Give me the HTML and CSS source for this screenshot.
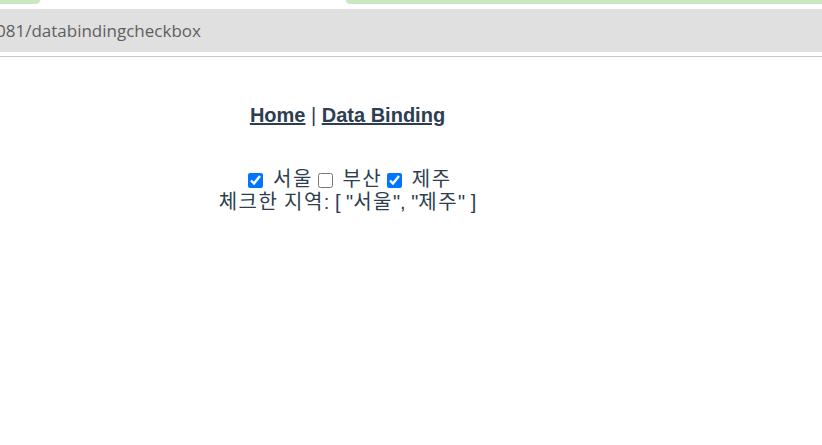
FILE: index.html
```html
<!DOCTYPE html>
<html lang="ko">
<head>
<meta charset="utf-8">
<title>databindingcheckbox</title>
<link rel="stylesheet" href="styles.css">
</head>
<body>
<div class="chrome">
  <div class="tabs">
    <div class="tab tab-left"></div>
    <div class="tab-gap"></div>
    <div class="tab tab-right"></div>
  </div>
  <div class="addressbar"><span class="url">081/databindingcheckbox</span></div>
  <div class="divider"></div>
</div>
<div class="page">
  <div class="nav"><a href="#" class="nav-link">Home</a> | <a href="#" class="nav-link">Data Binding</a></div>
  <div class="view">
    <div class="row"><input type="checkbox" id="seoul" class="cb" checked> <label for="seoul" class="ko">서울</label><input type="checkbox" id="busan" class="cb"> <label for="busan" class="ko">부산</label><input type="checkbox" id="jeju" class="cb" checked> <label for="jeju" class="ko">제주</label></div>
    <div class="row"><span class="ko">체크한</span> <span class="ko">지역</span>: [ "<span class="ko">서울</span>", "<span class="ko">제주</span>" ]</div>
  </div>
</div>
</body>
</html>
```
FILE: styles.css
```css
html, body {
  margin: 0;
  padding: 0;
  background: #ffffff;
}
body {
  width: 822px;
  height: 445px;
  overflow: hidden;
}
.chrome {
  display: flex;
  flex-direction: column;
}
.tabs {
  display: flex;
  height: 9px;
}
.tab {
  height: 4px;
  background: #cce8c1;
}
.tab-left {
  width: 40px;
  border-bottom-right-radius: 6px;
}
.tab-gap {
  width: 306px;
}
.tab-right {
  flex: 1;
  border-bottom-left-radius: 6px;
}
.addressbar {
  height: 43px;
  background: #e0e0e0;
  display: flex;
  align-items: center;
  overflow: hidden;
}
.url {
  font-family: "Open Sans", "Noto Sans", sans-serif;
  font-size: 17px;
  color: #5f5f5f;
  margin-left: -4px;
  white-space: nowrap;
}
.divider {
  margin-top: 4px;
  height: 1px;
  background: #c8c8c8;
}
.page {
  width: 695px;
  text-align: center;
  color: #2c3e50;
  font-family: "Liberation Sans", Arial, "Noto Sans CJK KR", sans-serif;
  font-size: 20px;
  line-height: 23px;
  padding-top: 47px;
}
.nav {
  padding-bottom: 41px;
}
.nav-link {
  font-weight: bold;
  color: #2c3e50;
  text-decoration: underline;
}
.ko {
  letter-spacing: 1.5px;
}
.cb {
  width: 15px;
  height: 15px;
  margin: 3px 4px 3px 5px;
  vertical-align: -2px;
  accent-color: #0075ff;
}
```
